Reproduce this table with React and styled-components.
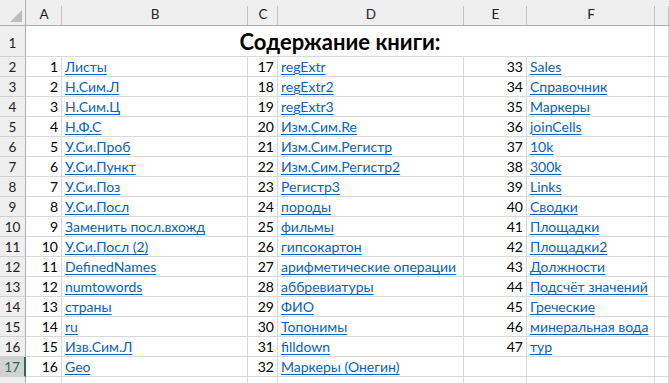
import React from "react";
import styled, { createGlobalStyle, css } from "styled-components";

const Global = createGlobalStyle`
  html, body { margin: 0; padding: 0; background: #fff; }
  body { font-family: Lato, "Open Sans", sans-serif; overflow: hidden; }
`;

const GRID = "#d9d9d9";
const HEAD_BG = "#efefef";
const HEAD_LINE = "#ababab";

const Sheet = styled.div`
  display: grid;
  grid-template-columns: 26px 36px 186px 30px 186px 63px 128px 1fr;
  grid-template-rows: 26px 31px repeat(17, 20px);
  width: 669px;
  height: 383px;
  overflow: hidden;
  font-size: 14px;
  color: #000;
`;

const Corner = styled.div`
  background: ${HEAD_BG};
  border-right: 1px solid ${HEAD_LINE};
  border-bottom: 1px solid ${HEAD_LINE};
  display: flex;
  align-items: flex-end;
  justify-content: flex-end;
  padding: 0 3px 3px 0;
  box-sizing: border-box;
`;

const ColHead = styled.div`
  position: relative;
  background: ${HEAD_BG};
  border-bottom: 1px solid ${HEAD_LINE};
  display: flex;
  align-items: center;
  justify-content: center;
  padding-top: 2px;
  box-sizing: border-box;
  color: #222;
  font-size: 13.5px;
  &::after {
    content: "";
    position: absolute;
    right: 0;
    top: 6px;
    bottom: 0;
    width: 1px;
    background: #c4c4c4;
  }
`;

const RowHead = styled.div`
  background: ${(p) => (p.$selected ? "#d2d2d2" : HEAD_BG)};
  border-right: ${(p) => (p.$selected ? "2px solid #217346" : `1px solid ${HEAD_LINE}`)};
  border-bottom: 1px solid #d0d0d0;
  display: flex;
  align-items: ${(p) => (p.$tall ? "flex-end" : "center")};
  justify-content: center;
  padding-bottom: ${(p) => (p.$tall ? "5px" : "0")};
  box-sizing: border-box;
  color: ${(p) => (p.$selected ? "#217346" : "#222")};
  font-size: 13.5px;
`;

const cellBase = css`
  border-right: 1px solid ${GRID};
  border-bottom: 1px solid ${GRID};
  box-sizing: border-box;
  display: flex;
  align-items: center;
  white-space: nowrap;
  min-width: 0;
`;

const Title = styled.div`
  ${cellBase};
  grid-column: 2 / span 6;
  justify-content: center;
  align-items: flex-end;
  padding-bottom: 1px;
  font-weight: 700;
  font-size: 22px;
  line-height: 26px;
`;

const EmptyCell = styled.div`
  ${cellBase};
`;

const NumCell = styled.div`
  ${cellBase};
  justify-content: flex-end;
  padding-right: 3px;
`;

const LinkCell = styled.div`
  ${cellBase};
  padding-left: 3px;
  overflow: visible;
`;

const Link = styled.a`
  color: #0563c1;
  text-decoration: underline;
  text-underline-offset: 2px;
  text-decoration-thickness: 1px;
  cursor: pointer;
`;

const colA = [
  "Листы", "Н.Сим.Л", "Н.Сим.Ц", "Н.Ф.С", "У.Си.Проб", "У.Си.Пункт", "У.Си.Поз",
  "У.Си.Посл", "Заменить посл.вхожд", "У.Си.Посл (2)", "DefinedNames", "numtowords",
  "страны", "ru", "Изв.Сим.Л", "Geo",
];
const colC = [
  "regExtr", "regExtr2", "regExtr3", "Изм.Сим.Re", "Изм.Сим.Регистр", "Изм.Сим.Регистр2",
  "Регистр3", "породы", "фильмы", "гипсокартон", "арифметические операции", "аббревиатуры",
  "ФИО", "Топонимы", "filldown", "Маркеры (Онегин)",
];
const colE = [
  "Sales", "Справочник", "Маркеры", "joinCells", "10k", "300k", "Links", "Сводки",
  "Площадки", "Площадки2", "Должности", "Подсчёт значений", "Греческие",
  "минеральная вода", "тур",
];

const letters = ["A", "B", "C", "D", "E", "F", ""];

function Pair({ n, text }) {
  if (!text) {
    return (
      <>
        <EmptyCell />
        <EmptyCell />
      </>
    );
  }
  return (
    <>
      <NumCell>{n}</NumCell>
      <LinkCell>
        <Link>{text}</Link>
      </LinkCell>
    </>
  );
}

export default function App() {
  const rows = [];
  for (let i = 0; i < 16; i++) {
    const r = i + 2;
    rows.push(
      <React.Fragment key={r}>
        <RowHead $selected={r === 17}>{r}</RowHead>
        <Pair n={i + 1} text={colA[i]} />
        <Pair n={i + 17} text={colC[i]} />
        <Pair n={i + 33} text={colE[i]} />
        <EmptyCell />
      </React.Fragment>
    );
  }
  return (
    <>
      <Global />
      <Sheet>
        <Corner>
          <svg width="12" height="12" viewBox="0 0 12 12">
            <polygon points="12,0 12,12 0,12" fill="#bdbdbd" />
          </svg>
        </Corner>
        {letters.map((l, i) => (
          <ColHead key={i}>{l}</ColHead>
        ))}
        <RowHead $tall>1</RowHead>
        <Title>Содержание книги:</Title>
        <EmptyCell />
        {rows}
        <RowHead />
        {[0, 1, 2, 3, 4, 5, 6].map((k) => (
          <EmptyCell key={k} />
        ))}
      </Sheet>
    </>
  );
}
